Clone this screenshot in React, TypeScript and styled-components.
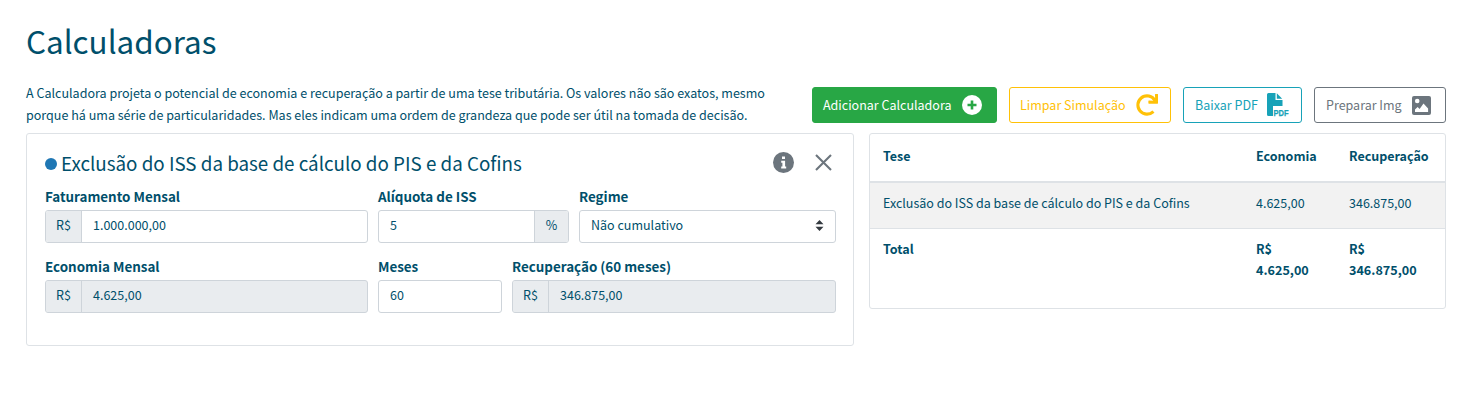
import React from "react";
import styled, { createGlobalStyle } from "styled-components";
import { FaRedo } from "react-icons/fa";

const Global = createGlobalStyle`
  html, body { margin: 0; padding: 0; background: #fff; }
  body { font-family: "Noto Sans CJK SC", "Liberation Sans", sans-serif; font-size: 12.5px; color: #004f6b; line-height: 1.5; }
  * { box-sizing: border-box; }
`;

const Page = styled.div`
  width: 1470px;
  height: 409px;
  padding: 18px 24px 0 26px;
  overflow: hidden;
`;

const Title = styled.h1`
  margin: 0;
  height: 51px;
  font-size: 31.4px;
  line-height: 46px;
  font-weight: 400;
  color: #004f6b;
`;

const Intro = styled.div`
  display: flex;
  align-items: flex-start;
  justify-content: space-between;
  margin-top: 13px;
  height: 51px;
`;

const IntroText = styled.p`
  margin: 0;
  width: 770px;
  font-size: 12.54px;
  line-height: 22px;
`;

const Actions = styled.div`
  display: flex;
  gap: 12px;
  padding-top: 5px;
`;

const Action = styled.button<{ $tone: string; $solid?: boolean; $w: number; $pad: string }>`
  display: flex;
  align-items: center;
  justify-content: space-between;
  white-space: nowrap;
  width: ${(p) => p.$w}px;
  height: 36px;
  padding: ${(p) => p.$pad};
  border: 1px solid ${(p) => p.$tone};
  border-radius: 3px;
  background: ${(p) => (p.$solid ? p.$tone : "#fff")};
  color: ${(p) => (p.$solid ? "#fff" : p.$tone)};
  font: inherit;
  font-size: 12.5px;
`;

const Columns = styled.div`
  display: flex;
  justify-content: space-between;
  align-items: flex-start;
`;

const Card = styled.section<{ $w: number; $h: number }>`
  width: ${(p) => p.$w}px;
  height: ${(p) => p.$h}px;
  border: 1px solid #dee2e6;
  border-radius: 3px;
  background: #fff;
`;

const CalcBody = styled.div`
  padding: 14px 17px 0 18px;
`;

const CalcHeader = styled.div`
  display: flex;
  align-items: center;
  justify-content: space-between;
  height: 32px;
  margin-bottom: 6px;
`;

const CalcTitle = styled.h2`
  display: flex;
  align-items: center;
  gap: 4px;
  margin: 0;
  padding-bottom: 2px;
  font-size: 18.8px;
  line-height: 30px;
  font-weight: 400;
`;

const Dot = styled.span`
  width: 12px;
  height: 12px;
  margin-top: 2px;
  border-radius: 50%;
  background: #1f77b4;
`;

const CalcTools = styled.div`
  display: flex;
  align-items: center;
  gap: 21px;
  padding-right: 4px;
  margin-bottom: 3px;
`;

const FieldRow = styled.div<{ $cols: string }>`
  display: grid;
  grid-template-columns: ${(p) => p.$cols};
  column-gap: 10px;
  margin-bottom: 13px;
`;

const Field = styled.div`
  display: flex;
  flex-direction: column;
`;

const Label = styled.label`
  font-size: 13.4px;
  font-weight: 700;
  line-height: 21px;
  margin-bottom: 3px;
`;

const InputGroup = styled.div<{ $off?: boolean }>`
  display: flex;
  height: 33px;
  border: 1px solid #ced4da;
  border-radius: 3px;
  overflow: hidden;
  background: ${(p) => (p.$off ? "#e9ecef" : "#fff")};
`;

const Addon = styled.span<{ $end?: boolean }>`
  display: flex;
  align-items: center;
  justify-content: center;
  width: ${(p) => (p.$end ? 34 : 36)}px;
  flex: none;
  padding-bottom: 2px;
  background: #e9ecef;
  ${(p) => (p.$end ? "border-left" : "border-right")}: 1px solid #ced4da;
`;

const Value = styled.span`
  flex: 1;
  display: flex;
  align-items: center;
  justify-content: space-between;
  padding: 0 11px 2px;
`;

const Table = styled.table`
  width: 100%;
  table-layout: fixed;
  border-collapse: collapse;
`;

const Th = styled.th<{ $w?: number }>`
  ${(p) => (p.$w ? `width: ${p.$w}px;` : "")}
  height: 48px;
  padding: 0 13px 2px;
  text-align: left;
  font-size: 12.5px;
  font-weight: 700;
  border-bottom: 2px solid #dee2e6;
`;

const Td = styled.td`
  height: 46px;
  padding: 0 13px 4px;
`;

const BodyRow = styled.tr`
  background: #f2f2f2;
  border-bottom: 1px solid #dee2e6;
`;

const TotalCell = styled.td`
  padding: 9px 13px 0;
  vertical-align: top;
  font-size: 12.6px;
  line-height: 21px;
  font-weight: 700;
`;

const PlusIcon = () => (
  <svg width="20" height="20" viewBox="0 0 20 20">
    <circle cx="10" cy="10" r="10" fill="#fff" />
    <path d="M10 5.5v9M5.5 10h9" stroke="#28a745" strokeWidth="2.6" />
  </svg>
);

const PdfIcon = () => (
  <svg width="27" height="24" viewBox="0 0 27 24">
    <path d="M1.5 0H8.5v7h7v6H6v10H1.5A1.5 1.5 0 0 1 0 21.5V1.5A1.5 1.5 0 0 1 1.5 0z" fill="#17a2b8" />
    <path d="M9.8 0.3l5.4 5.4H9.8z" fill="#17a2b8" />
    <text x="6.6" y="22.8" fontSize="9.6" fontWeight="700" fill="#17a2b8" stroke="#17a2b8" strokeWidth="0.25" fontFamily="Liberation Sans, sans-serif" textLength="15" lengthAdjust="spacingAndGlyphs">PDF</text>
  </svg>
);

const ImageIcon = () => (
  <svg width="19" height="19" viewBox="0 0 19 19">
    <rect width="19" height="19" rx="2" fill="#6c757d" />
    <circle cx="5.2" cy="5" r="2.3" fill="#fff" />
    <path d="M3 16v-2.4l2.6-2.6 2 1.9L11.5 7.5l4.6 5V16z" fill="#fff" />
  </svg>
);

const InfoIcon = () => (
  <svg width="21" height="21" viewBox="0 0 21 21">
    <circle cx="10.5" cy="10.5" r="10.5" fill="#6c757d" />
    <path fill="#fff" d="M9 4.5h3v2.6H9zM8.2 8.8h3.9v5.8h1.1v1.9H8.2v-1.9h1.2v-3.9H8.2z" />
  </svg>
);

const CloseIcon = () => (
  <svg width="17" height="17" viewBox="0 0 17 17">
    <path d="M1 1l15 15M16 1L1 16" stroke="#6c757d" strokeWidth="2.1" />
  </svg>
);

const SelectArrows = () => (
  <svg width="9" height="11" viewBox="0 0 9 11">
    <path d="M4.5 0L8.5 4.2H.5zM4.5 11L.5 6.8h8z" fill="#343a40" />
  </svg>
);

export default function App() {
  return (
    <Page>
      <Global />
      <Title>Calculadoras</Title>
      <Intro>
        <IntroText>
          A Calculadora projeta o potencial de economia e recuperação a partir de uma tese tributária. Os valores não são exatos, mesmo porque há uma série de particularidades. Mas eles indicam uma ordem de grandeza que pode ser útil na tomada de decisão.
        </IntroText>
        <Actions>
          <Action $tone="#28a745" $solid $w={185} $pad="0 14px 0 10px">Adicionar Calculadora <PlusIcon /></Action>
          <Action $tone="#ffc107" $w={162} $pad="0 12px 0 10px">Limpar Simulação <FaRedo size={22} /></Action>
          <Action $tone="#17a2b8" $w={119} $pad="0 7px 0 11px">Baixar PDF <PdfIcon /></Action>
          <Action $tone="#6c757d" $w={132} $pad="0 14px 0 11px">Preparar Img <ImageIcon /></Action>
        </Actions>
      </Intro>
      <Columns>
        <Card $w={828} $h={213}>
          <CalcBody>
            <CalcHeader>
              <CalcTitle><Dot />Exclusão do ISS da base de cálculo do PIS e da Cofins</CalcTitle>
              <CalcTools><InfoIcon /><CloseIcon /></CalcTools>
            </CalcHeader>
            <FieldRow $cols="323px 191px 1fr">
              <Field>
                <Label>Faturamento Mensal</Label>
                <InputGroup><Addon>R$</Addon><Value>1.000.000,00</Value></InputGroup>
              </Field>
              <Field>
                <Label>Alíquota de ISS</Label>
                <InputGroup><Value>5</Value><Addon $end>%</Addon></InputGroup>
              </Field>
              <Field>
                <Label>Regime</Label>
                <InputGroup><Value>Não cumulativo <SelectArrows /></Value></InputGroup>
              </Field>
            </FieldRow>
            <FieldRow $cols="323px 124px 1fr">
              <Field>
                <Label>Economia Mensal</Label>
                <InputGroup $off><Addon>R$</Addon><Value>4.625,00</Value></InputGroup>
              </Field>
              <Field>
                <Label>Meses</Label>
                <InputGroup><Value>60</Value></InputGroup>
              </Field>
              <Field>
                <Label>Recuperação (60 meses)</Label>
                <InputGroup $off><Addon>R$</Addon><Value>346.875,00</Value></InputGroup>
              </Field>
            </FieldRow>
          </CalcBody>
        </Card>
        <Card $w={577} $h={176}>
          <Table>
            <thead>
              <tr>
                <Th>Tese</Th>
                <Th $w={93}>Economia</Th>
                <Th $w={109}>Recuperação</Th>
              </tr>
            </thead>
            <tbody>
              <BodyRow>
                <Td>Exclusão do ISS da base de cálculo do PIS e da Cofins</Td>
                <Td>4.625,00</Td>
                <Td>346.875,00</Td>
              </BodyRow>
              <tr>
                <TotalCell>Total</TotalCell>
                <TotalCell>R$ 4.625,00</TotalCell>
                <TotalCell>R$ 346.875,00</TotalCell>
              </tr>
            </tbody>
          </Table>
        </Card>
      </Columns>
    </Page>
  );
}
